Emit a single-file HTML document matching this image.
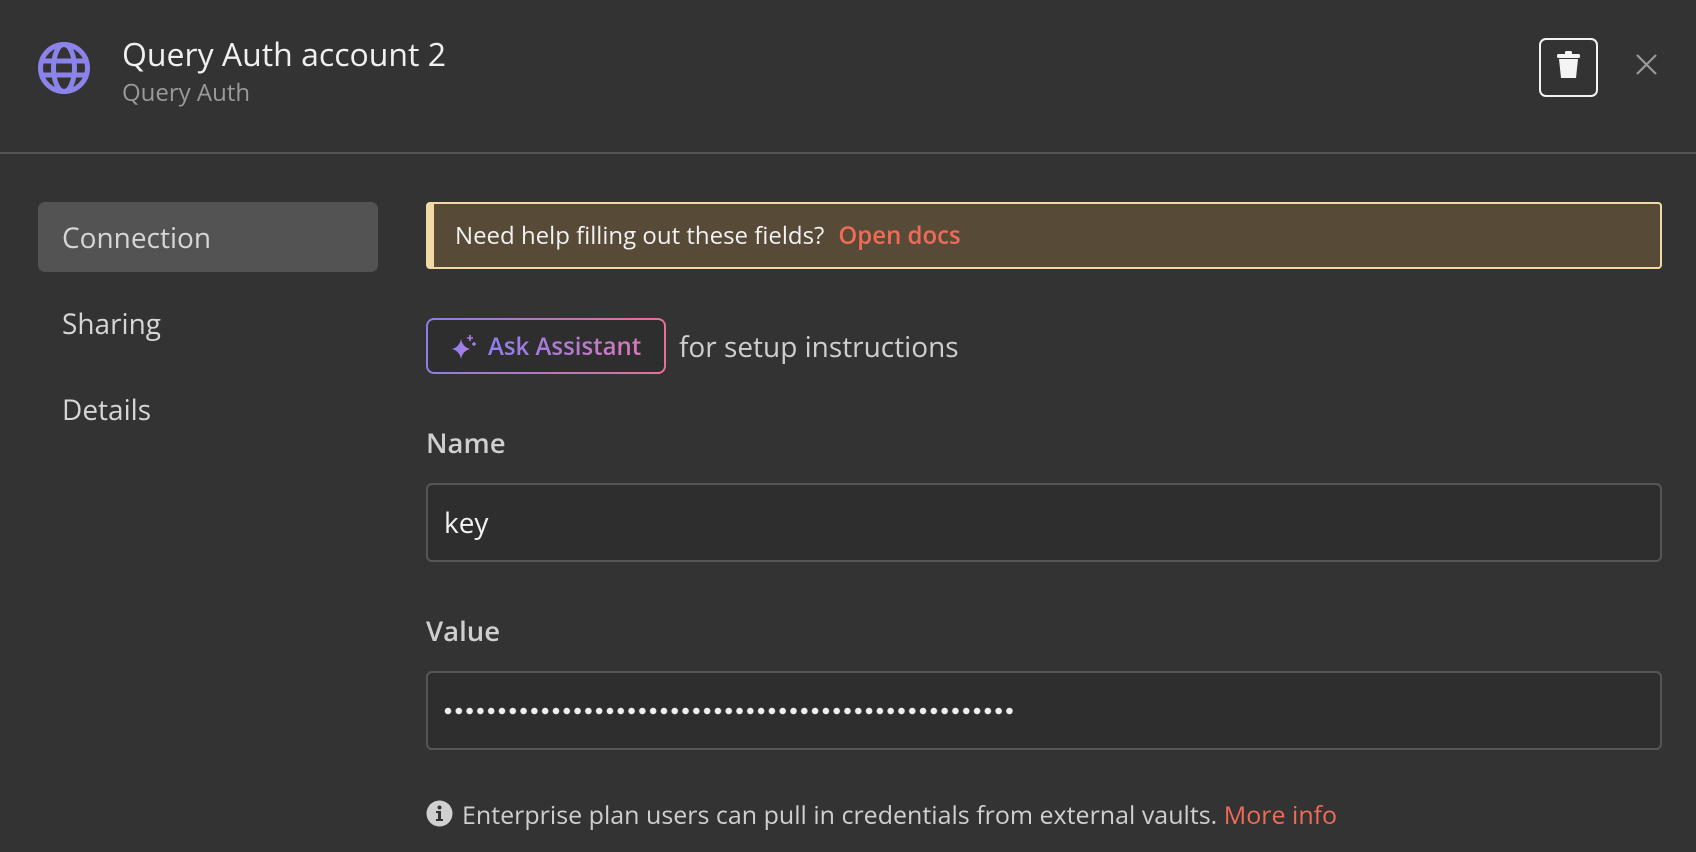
<!DOCTYPE html>
<html><head><meta charset="utf-8"><style>
*{box-sizing:border-box;margin:0;padding:0}
body{width:1696px;height:852px;background:#333;font-family:"Open Sans","Liberation Sans",sans-serif;color:#ececec;position:relative;overflow:hidden}
.abs{position:absolute}
.hdr{left:0;top:152px;width:1696px;height:2px;background:#545454}
.title{left:122px;top:33px;font-size:32px;color:#f0f0f0;white-space:nowrap}
.sub{left:122px;top:76px;font-size:24px;color:#9a9a9a}
.trash{left:1539px;top:38px;width:59px;height:59px;border:2px solid #f2f2f2;border-radius:7px}
.nav{left:38px;top:202px;width:340px;height:70px;background:#535353;border-radius:7px}
.navt{font-size:28px;color:#d6d6d6;left:62px}
.banner{left:426px;top:202px;width:1236px;height:67px;background:#574a37;border:2px solid #f3d9a8;border-left:8px solid #f3d9a8;border-radius:4px;font-size:24px;color:#f2f2f2;padding-left:21px;line-height:64px;white-space:nowrap}
.banner b{color:#f06b57;font-weight:600;margin-left:14px}
.ask{left:426px;top:318px;width:240px;height:56px;border-radius:8px;padding:2px;background:linear-gradient(90deg,#8b7ee8,#e96f95)}
.ask div{width:100%;height:100%;background:#2e2e2e;border-radius:6px;font-size:24px;font-weight:600;line-height:54px;padding-left:60px;white-space:nowrap}
.ask span{background:linear-gradient(90deg,#8c7fee,#d978b9);-webkit-background-clip:text;background-clip:text;color:transparent}
.lbl{left:426px;font-size:27.5px;font-weight:600;color:#cfcfcf}
.inp{left:426px;width:1236px;height:79px;border:2px solid #565656;border-radius:6px;background:#2e2e2e}
</style></head><body>
<svg class="abs" style="left:37px;top:41px" width="54" height="54" viewBox="0 0 54 54" fill="none" stroke="#8c83ea" stroke-width="5"><circle cx="27" cy="27" r="23.5"/><ellipse cx="27" cy="27" rx="10.5" ry="23.5"/><line x1="4" y1="20" x2="50" y2="20"/><line x1="4" y1="34" x2="50" y2="34"/></svg>
<div class="abs title">Query Auth account 2</div>
<div class="abs sub">Query Auth</div>
<div class="abs trash"><svg width="55" height="55" viewBox="0 0 55 55"><rect x="16" y="14" width="23" height="4" rx="1.5" fill="#f4f4f4"/><rect x="24" y="11" width="7" height="4" rx="1.5" fill="#f4f4f4"/><path d="M18 19h19l-2 19h-15z" fill="#f4f4f4"/></svg></div>
<svg class="abs" style="left:1636px;top:54px" width="21" height="21" viewBox="0 0 21 21" stroke="#9a9a9a" stroke-width="2.2"><line x1="1" y1="1" x2="20" y2="20"/><line x1="20" y1="1" x2="1" y2="20"/></svg>
<div class="abs hdr"></div>
<div class="abs nav"></div>
<div class="abs navt" style="top:219px">Connection</div>
<div class="abs navt" style="top:305px">Sharing</div>
<div class="abs navt" style="top:391px">Details</div>
<div class="abs banner">Need help filling out these fields?<b>Open docs</b></div>
<div class="abs ask"><div><span>Ask Assistant</span></div></div>
<svg class="abs" style="left:450px;top:333px" width="28" height="28" viewBox="0 0 28 28"><defs><linearGradient id="g" x1="0" x2="1"><stop offset="0" stop-color="#8c7fee"/><stop offset="1" stop-color="#b07ee0"/></linearGradient></defs><path d="M11 6 Q12.5 14 20 16 Q12.5 18 11 26 Q9.5 18 2 16 Q9.5 14 11 6Z" fill="url(#g)"/><path d="M20 2v6M17 5h6" stroke="#a87fe5" stroke-width="1.6"/><path d="M24 9v4M22 11h4" stroke="#a87fe5" stroke-width="1.4"/></svg>
<div class="abs" style="left:679px;top:328px;font-size:28px;color:#cfcfcf;white-space:nowrap">for setup instructions</div>
<div class="abs lbl" style="top:425px">Name</div>
<div class="abs inp" style="top:483px"></div>
<div class="abs" style="left:444px;top:504px;font-size:28px;color:#f2f2f2">key</div>
<div class="abs lbl" style="top:613px">Value</div>
<div class="abs inp" style="top:671px"></div>
<div class="abs" style="left:444px;top:707px;width:570px;height:8px;background:radial-gradient(circle at 4px 4px,#eee 3px,transparent 3.5px);background-size:10.8px 8px"></div>
<svg class="abs" style="left:426px;top:800px" width="27" height="27" viewBox="0 0 27 27"><circle cx="13.5" cy="13.5" r="13" fill="#d0d0d0"/><circle cx="13.5" cy="7.5" r="2" fill="#333"/><path d="M10 11h5v8h2v2h-7v-2h2v-6h-2z" fill="#333"/></svg>
<div class="abs" style="left:462px;top:798px;font-size:25px;color:#cfcfcf;white-space:nowrap">Enterprise plan users can pull in credentials from external vaults. <span style="color:#f06b57">More info</span></div>
</body></html>
